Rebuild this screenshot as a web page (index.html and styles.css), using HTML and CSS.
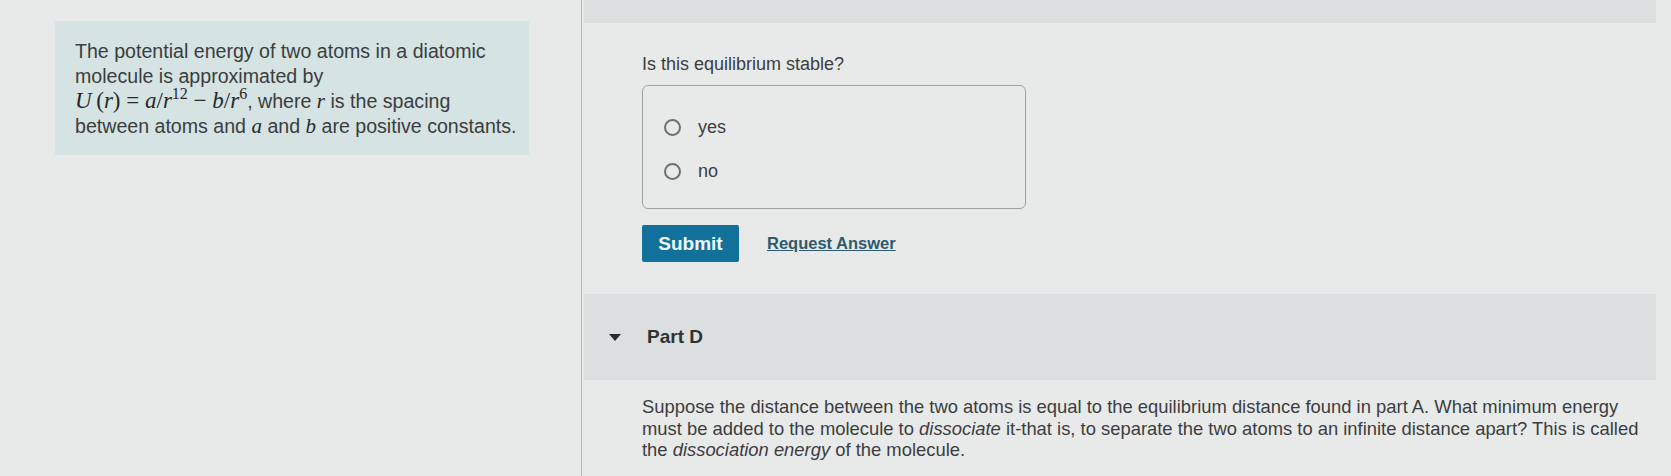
FILE: index.html
```html
<!DOCTYPE html>
<html lang="en">
<head>
    <meta charset="UTF-8">
    <meta name="viewport" content="width=device-width, initial-scale=1.0">
    <title>Part C - Diatomic molecule</title>
    <link rel="stylesheet" href="styles.css">
</head>
<body>
    <div class="page">
        <!-- Problem intro -->
        <div class="intro-col">
            <div class="intro">
                The potential energy of two atoms in a diatomic molecule is approximated by<br>
                <span class="math"><i>U</i>&#8201;(<i>r</i>) = <i>a</i>/<i>r</i><sup>12</sup> &minus; <i>b</i>/<i>r</i><sup>6</sup></span>, where <span class="math var"><i>r</i></span> is the spacing
                between atoms and <span class="math var"><i>a</i></span> and <span class="math var"><i>b</i></span> are positive constants.
            </div>
        </div>

        <div class="parts-col">
            <div class="part-band"></div>

            <div class="part-body">
                <p class="question">Is this equilibrium stable?</p>
                <div class="choices">
                    <label class="choice"><span class="radio"></span>yes</label>
                    <label class="choice"><span class="radio"></span>no</label>
                </div>
                <div class="actions">
                    <button class="submit">Submit</button>
                    <a href="#" class="request">Request Answer</a>
                </div>
            </div>

            <!-- Part D -->
            <div class="part-header">
                <span class="caret"></span>
                <span class="part-title">Part D</span>
            </div>
            <p class="part-text">
                Suppose the distance between the two atoms is equal to the equilibrium distance found in part A. What minimum energy
                must be added to the molecule to <em>dissociate</em> it-that is, to separate the two atoms to an infinite distance apart? This is called
                the <em>dissociation energy</em> of the molecule.
            </p>
        </div>
    </div>
</body>
</html>
```

FILE: styles.css
```css
body {
    margin: 0;
    background: #e8eaea;
    font-family: "Liberation Sans", Arial, sans-serif;
    color: #3b3d3e;
}
.page {
    display: flex;
    height: 476px;
    overflow: hidden;
}
.intro-col {
    width: 474px;
    padding: 21px 52px 0 55px;
    border-right: 1px solid #b4b8ba;
    flex-shrink: 0;
}
.intro {
    background: #d5e3e3;
    padding: 18px 0 16px 20px;
    font-size: 19.6px;
    line-height: 25px;
}
.math {
    font-family: "Liberation Serif", "Times New Roman", serif;
    font-size: 23px;
    line-height: 0;
    color: #26282a;
    white-space: nowrap;
}
.math.var {
    font-size: 21px;
}
.math sup {
    font-size: 16px;
    line-height: 0;
}
.parts-col {
    flex: 1;
    padding: 0 15px 0 2px;
}
.part-band {
    height: 23px;
    background: #dcdfdf;
}
.part-body {
    padding-left: 58px;
}
.question {
    margin: 30px 0 10px;
    font-size: 18px;
    line-height: 22px;
}
.choices {
    box-sizing: border-box;
    width: 384px;
    height: 124px;
    border: 1px solid #9ea2a4;
    border-radius: 6px;
    padding-top: 29px;
    display: flex;
    flex-direction: column;
    gap: 20px;
}
.choice {
    display: flex;
    align-items: center;
    height: 24px;
    padding-left: 21px;
    font-size: 18px;
}
.radio {
    width: 13px;
    height: 13px;
    border: 2px solid #6e7072;
    border-radius: 50%;
    margin-right: 17px;
}
.actions {
    display: flex;
    align-items: center;
    gap: 28px;
    margin-top: 16px;
}
.submit {
    width: 97px;
    height: 37px;
    border: none;
    border-radius: 2px;
    background: #11719a;
    color: #eef7fa;
    font-family: inherit;
    font-size: 19px;
    font-weight: bold;
}
.request {
    color: #2d5a6e;
    font-size: 16.5px;
    font-weight: bold;
    text-decoration: underline;
}
.part-header {
    margin-top: 32px;
    height: 86px;
    background: #dcdfdf;
    display: flex;
    align-items: center;
    padding-left: 25px;
}
.caret {
    width: 0;
    height: 0;
    border-left: 6px solid transparent;
    border-right: 6px solid transparent;
    border-top: 7px solid #2a2c2e;
    margin-right: 26px;
}
.part-title {
    font-size: 19px;
    font-weight: bold;
    color: #2f3133;
}
.part-text {
    width: 1008px;
    margin: 16px 0 0 58px;
    font-size: 18.4px;
    line-height: 21.5px;
}
.part-text em {
    font-style: italic;
}
```
